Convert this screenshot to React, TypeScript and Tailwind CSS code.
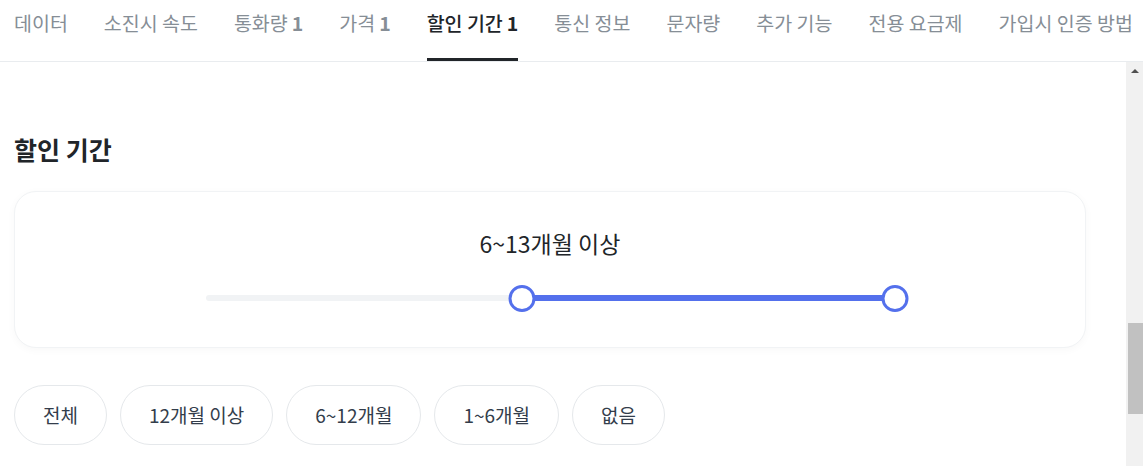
const tabs = [
  { label: "데이터" },
  { label: "소진시 속도" },
  { label: "통화량", count: 1 },
  { label: "가격", count: 1 },
  { label: "할인 기간", count: 1, active: true },
  { label: "통신 정보" },
  { label: "문자량" },
  { label: "추가 기능" },
  { label: "전용 요금제" },
  { label: "가입시 인증 방법" },
];

const options = ["전체", "12개월 이상", "6~12개월", "1~6개월", "없음"];

export default function App() {
  const min = 45.9;
  const max = 100;

  return (
    <div
      className="flex h-[466px] w-[1143px] flex-col overflow-hidden bg-white text-[#212529]"
      style={{ fontFamily: '"Noto Sans CJK KR", "Noto Sans", sans-serif' }}
    >
      {/* Tabs */}
      <nav className="flex h-[62px] shrink-0 gap-9 overflow-hidden whitespace-nowrap border-b border-[#e9ecef] px-[14px]">
        {tabs.map((tab) => (
          <div
            key={tab.label}
            className={
              tab.active
                ? "relative flex h-full items-center pb-[16px] text-[19.5px] font-medium text-[#212529]"
                : "relative flex h-full items-center pb-[16px] text-[19.5px] text-[#868e96]"
            }
          >
            <span>{tab.label}</span>
            {tab.count && <span className="ml-[4px] font-bold">{tab.count}</span>}
            {tab.active && (
              <div className="absolute bottom-0 left-0 right-0 h-[3px] bg-[#212529]" />
            )}
          </div>
        ))}
      </nav>

      <div className="flex flex-1 overflow-hidden">
        <main className="flex-1 px-[14px] pt-[72px]">
          <h2 className="text-[25px] font-bold leading-[30px] text-[#212529]">
            할인 기간
          </h2>

          {/* Slider card */}
          <div className="mt-[27px] flex h-[157px] w-[1072px] flex-col items-center rounded-[22px] border border-[#f1f3f5] bg-white pt-[37px] shadow-[0_2px_8px_rgba(0,0,0,.03)]">
            <p className="text-[23px] leading-[28px] text-[#212529]">6~13개월 이상</p>

            <div className="relative mt-[28px] h-[26px] w-[689px]">
              <div className="absolute left-0 right-0 top-[10px] h-[6px] rounded-full bg-[#f1f3f5]" />
              <div
                className="absolute top-[10px] h-[6px] bg-[#5470ec]"
                style={{ left: `${min}%`, width: `${max - min}%` }}
              />
              <div
                className="absolute top-0 h-[27px] w-[27px] -translate-x-1/2 rounded-full border-[3px] border-[#5470ec] bg-white"
                style={{ left: `${min}%` }}
              />
              <div
                className="absolute top-0 h-[27px] w-[27px] -translate-x-1/2 rounded-full border-[3px] border-[#5470ec] bg-white"
                style={{ left: `${max}%` }}
              />
            </div>
          </div>

          {/* Options */}
          <div className="mt-[37px] flex gap-[13px]">
            {options.map((opt) => (
              <button
                key={opt}
                className="h-[60px] rounded-full border border-[#e5e8eb] bg-white px-[28px] text-[19px] text-[#333d4b]"
              >
                {opt}
              </button>
            ))}
          </div>
        </main>

        {/* Scrollbar */}
        <div className="flex w-[17px] shrink-0 flex-col bg-[#f1f1f1]">
          <div className="flex h-[17px] items-center justify-center">
            <div className="h-0 w-0 border-x-[4px] border-b-[4px] border-x-transparent border-b-[#505050]" />
          </div>
          <div className="mt-[244px] ml-[2px] h-[91px] bg-[#c1c1c1]" />
        </div>
      </div>
    </div>
  );
}
